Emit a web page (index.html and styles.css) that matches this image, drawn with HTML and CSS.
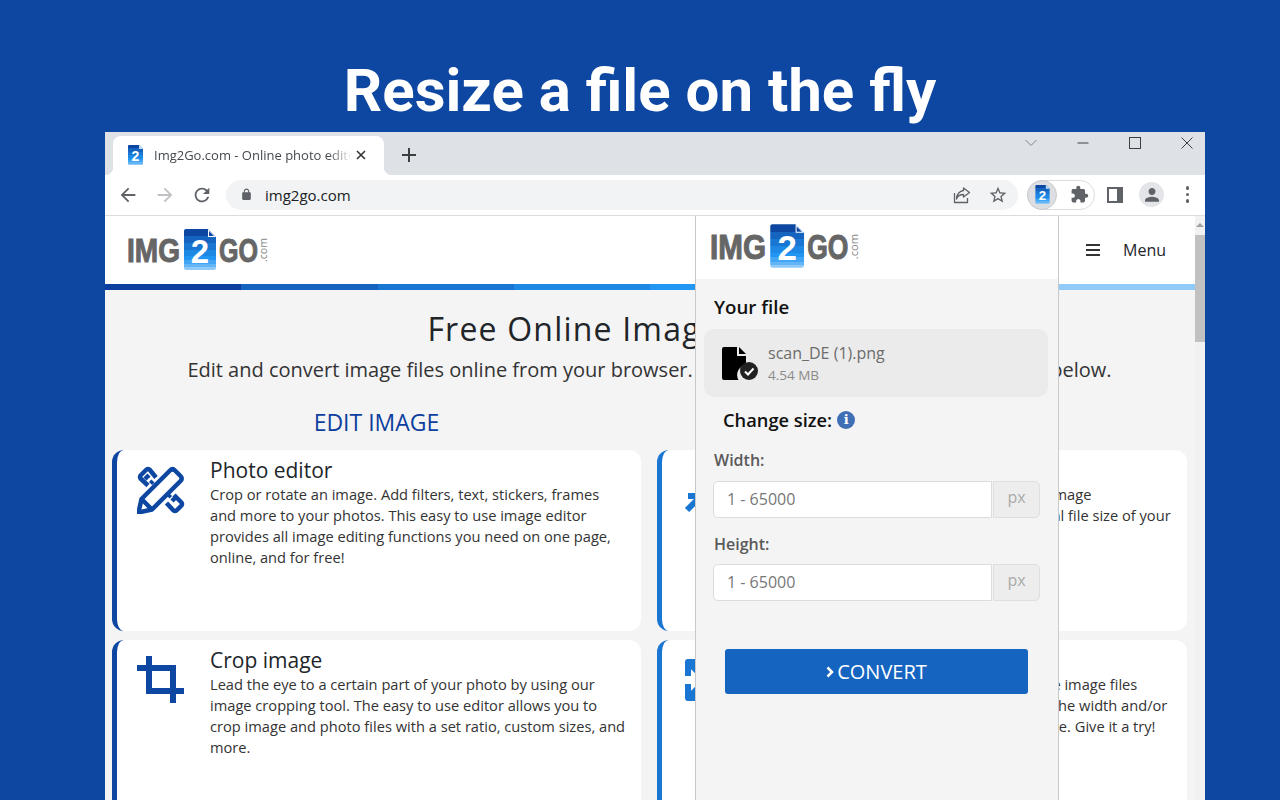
FILE: index.html
```html
<!DOCTYPE html>
<html lang="en">
<head>
<meta charset="utf-8">
<title>Resize a file on the fly</title>
<link rel="stylesheet" href="styles.css">
</head>
<body>
<svg class="defs" width="0" height="0" aria-hidden="true">
  <defs>
    <linearGradient id="fileGrad" x1="0" y1="0" x2="0" y2="1">
      <stop offset="0" stop-color="#0d47a1"/><stop offset=".17" stop-color="#0d47a1"/>
      <stop offset=".17" stop-color="#1565c0"/><stop offset=".34" stop-color="#1565c0"/>
      <stop offset=".34" stop-color="#1976d2"/><stop offset=".5" stop-color="#1976d2"/>
      <stop offset=".5" stop-color="#1e88e5"/><stop offset=".66" stop-color="#1e88e5"/>
      <stop offset=".66" stop-color="#2196f3"/><stop offset=".76" stop-color="#2196f3"/>
      <stop offset=".76" stop-color="#42a5f5"/><stop offset=".86" stop-color="#42a5f5"/>
      <stop offset=".86" stop-color="#64b5f6"/><stop offset=".93" stop-color="#64b5f6"/>
      <stop offset=".93" stop-color="#90caf9"/><stop offset="1" stop-color="#90caf9"/>
    </linearGradient>
    <symbol id="logo" viewBox="0 0 141 41">
      <text class="logo-word" x="0" y="33" textLength="53" lengthAdjust="spacingAndGlyphs">IMG</text>
      <path d="M59 0H81L89 8V39a2 2 0 0 1-2 2H59a2 2 0 0 1-2-2V2a2 2 0 0 1 2-2Z" fill="url(#fileGrad)"/>
      <path d="M81 0V8H89Z" fill="#fff"/><path d="M82 2V7H87Z" fill="#0d47a1"/>
      <text class="logo-two" x="73" y="34" text-anchor="middle">2</text>
      <text class="logo-word" x="92" y="33" textLength="39" lengthAdjust="spacingAndGlyphs">GO</text>
      <text class="logo-com" transform="translate(140 33) rotate(-90)" textLength="24" lengthAdjust="spacingAndGlyphs">.com</text>
    </symbol>
    <symbol id="fav" viewBox="0 0 15 20">
      <path d="M1 0H11L15 4V19a1 1 0 0 1-1 1H1a1 1 0 0 1-1-1V1a1 1 0 0 1 1-1Z" fill="url(#fileGrad)"/>
      <path d="M11 0V4H15Z" fill="#bbdefb"/>
      <text class="fav-two" x="7.5" y="15.5" text-anchor="middle">2</text>
    </symbol>
  </defs>
</svg>

<h1 class="headline">Resize a file on the fly</h1>

<div class="window">
  <div class="titlebar">
    <div class="tab">
      <svg class="favicon"><use href="#fav"/></svg>
      <span class="tab-title">Img2Go.com - Online photo editor</span>
      <svg class="tab-close" viewBox="0 0 10 10"><path d="M1 1L9 9M9 1L1 9"/></svg>
    </div>
    <svg class="new-tab" viewBox="0 0 14 14"><path d="M7 0V14M0 7H14"/></svg>
    <div class="win-controls">
      <svg class="win-icon" viewBox="0 0 12 12"><path d="M0.5 3L6 8.5L11.5 3"/></svg>
      <svg class="win-icon" viewBox="0 0 12 12"><path d="M0.5 6H11.5"/></svg>
      <svg class="win-icon" viewBox="0 0 12 12"><rect x="0.5" y="0.5" width="11" height="11"/></svg>
      <svg class="win-icon" viewBox="0 0 12 12"><path d="M0.5 0.5L11.5 11.5M11.5 0.5L0.5 11.5"/></svg>
    </div>
  </div>

  <div class="toolbar">
    <svg class="tb-icon" viewBox="0 0 24 24"><path d="M20 11H7.83l5.59-5.59L12 4l-8 8 8 8 1.41-1.41L7.83 13H20v-2z"/></svg>
    <svg class="tb-icon tb-disabled" viewBox="0 0 24 24"><path d="M4 11h12.17l-5.59-5.59L12 4l8 8-8 8-1.41-1.41L16.17 13H4v-2z"/></svg>
    <svg class="tb-icon" viewBox="0 0 24 24"><path d="M17.65 6.35C16.2 4.9 14.21 4 12 4c-4.42 0-7.99 3.58-7.99 8s3.57 8 7.99 8c3.73 0 6.84-2.55 7.73-6h-2.08c-.82 2.33-3.04 4-5.65 4-3.31 0-6-2.69-6-6s2.69-6 6-6c1.66 0 3.14.69 4.22 1.78L13 11h7V4l-2.35 2.35z"/></svg>
    <div class="omnibox">
      <svg class="lock" viewBox="0 0 24 24"><path d="M18 8h-1V6c0-2.76-2.24-5-5-5S7 3.24 7 6v2H6c-1.1 0-2 .9-2 2v10c0 1.1.9 2 2 2h12c1.1 0 2-.9 2-2V10c0-1.1-.9-2-2-2zM9 6c0-1.66 1.34-3 3-3s3 1.34 3 3v2H9V6z"/></svg>
      <span class="url">img2go.com</span>
      <svg class="omni-icon share" viewBox="0 0 20 20"><path d="M2.5 8V17.5H15.5V13M11.5 3L17.5 7.5L11.5 12V9.5C8 9.5 5.5 11 4.5 14C4.5 9.5 7.5 6 11.5 5.5Z"/></svg>
      <svg class="omni-icon star" viewBox="0 0 24 24"><path d="M22 9.24l-7.19-.62L12 2 9.19 8.63 2 9.24l5.46 4.73L5.82 21 12 17.27 18.18 21l-1.63-7.03L22 9.24zM12 15.4l-3.76 2.27 1-4.28-3.32-2.88 4.38-.38L12 6.1l1.71 4.04 4.38.38-3.32 2.88 1 4.28L12 15.4z"/></svg>
    </div>
    <div class="ext-pill">
      <span class="ext-active"><svg class="ext-fav"><use href="#fav"/></svg></span>
      <svg class="puzzle" viewBox="0 0 24 24"><path d="M20.5 11H19V7c0-1.1-.9-2-2-2h-4V3.5C13 2.12 11.88 1 10.5 1S8 2.12 8 3.5V5H4c-1.1 0-1.99.9-1.99 2v3.8H3.5c1.49 0 2.7 1.21 2.7 2.7s-1.21 2.7-2.7 2.7H2V20c0 1.1.9 2 2 2h3.8v-1.5c0-1.49 1.21-2.7 2.7-2.7 1.49 0 2.7 1.21 2.7 2.7V22H17c1.1 0 2-.9 2-2v-4h1.5c1.38 0 2.5-1.12 2.5-2.5S21.88 11 20.5 11z"/></svg>
    </div>
    <span class="side-panel"><span class="side-panel-inner"></span></span>
    <span class="avatar"><svg viewBox="0 0 24 24"><path d="M12 12c2.4 0 4.2-1.9 4.2-4.2S14.4 3.6 12 3.6 7.8 5.5 7.8 7.8 9.6 12 12 12zm0 2.2c-2.8 0-8.4 1.4-8.4 4.2V20h16.8v-1.6c0-2.8-5.6-4.2-8.4-4.2z"/></svg></span>
    <span class="dots"><i></i><i></i><i></i></span>
  </div>

  <div class="viewport">
    <div class="page">
      <header class="site-header">
        <svg class="site-logo"><use href="#logo"/></svg>
        <div class="site-menu">
          <span class="burger"><i></i><i></i><i></i></span>
          <span class="menu-label">Menu</span>
        </div>
      </header>
      <div class="stripe"><i class="s1"></i><i class="s2"></i><i class="s3"></i><i class="s4"></i><i class="s5"></i><i class="s6"></i><i class="s7"></i><i class="s8"></i></div>
      <main class="content">
        <h2 class="hero-title">Free Online Image Software</h2>
        <p class="hero-sub">Edit and convert image files online from your browser. Select your desired tools from the list below.</p>
        <div class="columns">
          <h3 class="col-title">EDIT IMAGE</h3>
          <h3 class="col-title">CONVERT IMAGE</h3>
          <article class="card">
            <svg class="card-icon" viewBox="0 0 48 48">
              <path d="M1.5 46.5L4.5 33L33 4.5Q35.5 2 38 4.5L43.5 10Q46 12.5 43.5 15L15 43.5Z"/>
              <path d="M4.5 33L15 43.5"/>
              <path d="M19 11.5L12.5 3.5Q11 2.5 9.5 3.5L3.5 9.5Q2.5 11 3.5 12.5L11 19.5M8 13L12 9M13.5 17.5L16 15M29.5 37L36.5 44.5Q38 45.5 39.5 44.5L44.5 39.5Q45.5 38 44.5 36.5L37 29M35 35L39 31M31 31L33.5 28.5"/>
            </svg>
            <div>
              <h4 class="card-title">Photo editor</h4>
              <p class="card-text">Crop or rotate an image. Add filters, text, stickers, frames and more to your photos. This easy to use image editor provides all image editing functions you need on one page, online, and for free!</p>
            </div>
          </article>
          <article class="card card-alt">
            <svg class="card-icon" viewBox="0 0 48 48">
              <path d="M5 44L20 29M31 18L44 5M31 4V18H45M6 30H20V44"/>
            </svg>
            <div>
              <h4 class="card-title">Compress image</h4>
              <p class="card-text card-fixed">Compress JPG, PNG, and other file types of image<br>online. Reduce the dimensions, and also total file size of your<br>pictures with this tool.</p>
            </div>
          </article>
          <article class="card">
            <svg class="card-icon" viewBox="0 0 48 48">
              <path d="M12 0V35H47M0 12H36V47"/>
            </svg>
            <div>
              <h4 class="card-title">Crop image</h4>
              <p class="card-text">Lead the eye to a certain part of your photo by using our image cropping tool. The easy to use editor allows you to crop image and photo files with a set ratio, custom sizes, and more.</p>
            </div>
          </article>
          <article class="card card-alt">
            <svg class="card-icon" viewBox="0 0 48 48">
              <path d="M6 20V6H20M6 6L20 20M6 28V42H20M6 42L20 28"/>
            </svg>
            <div>
              <h4 class="card-title">Resize image</h4>
              <p class="card-text card-fixed">Use this simple resizer tool to quickly change image files<br>you upload. Simply enter any new value for the width and/or<br>height to get your exact, desired size of image. Give it a try!</p>
            </div>
          </article>
        </div>
      </main>
    </div>
    <div class="scrollbar">
      <span class="scroll-up"></span>
      <span class="scroll-thumb"></span>
    </div>

    <aside class="popup">
      <div class="popup-head"><svg class="popup-logo"><use href="#logo"/></svg></div>
      <div class="popup-body">
        <h5 class="your-file">Your file</h5>
        <div class="file-box">
          <svg class="file-icon" viewBox="0 0 37 33">
            <path d="M2 0H15V9H24V18A10 10 0 0 0 16.5 33H2A2 2 0 0 1 0 31V2A2 2 0 0 1 2 0Z" fill="#000"/>
            <path d="M17 0L24 7H17Z" fill="#000"/>
            <circle cx="27" cy="24" r="9" fill="#222"/>
            <path class="file-check" d="M23 24.5L26 27.5L31.5 21.5"/>
          </svg>
          <div class="file-meta">
            <div class="file-name">scan_DE (1).png</div>
            <div class="file-size">4.54 MB</div>
          </div>
        </div>
        <div class="change-size">
          <span>Change size:</span>
          <span class="info">i</span>
        </div>
        <label class="field-label">Width:</label>
        <div class="field"><span class="field-input">1 - 65000</span><span class="field-unit">px</span></div>
        <label class="field-label field-label-2">Height:</label>
        <div class="field"><span class="field-input">1 - 65000</span><span class="field-unit">px</span></div>
        <button class="convert"><svg viewBox="0 0 8 12"><path d="M1.5 1.5L6 6L1.5 10.5"/></svg>CONVERT</button>
      </div>
    </aside>
  </div>
</div>
</body>
</html>
```

FILE: styles.css
```css
* { box-sizing: border-box; }
html, body { margin: 0; padding: 0; }
body {
  width: 1280px;
  height: 800px;
  overflow: hidden;
  background: #0e47a1;
  display: flex;
  flex-direction: column;
  font-family: "Open Sans", sans-serif;
}
.defs { position: absolute; }
.logo-word { font: 700 33px "Liberation Sans", sans-serif; fill: #666; stroke: #666; stroke-width: 1; }
.logo-two { font: 700 33px "Liberation Sans", sans-serif; fill: #fff; }
.logo-com { font: 400 10px "Open Sans", sans-serif; fill: #888; }
.fav-two { font: 700 14px "Liberation Sans", sans-serif; fill: #fff; }

.headline {
  margin: 0;
  height: 132px;
  padding-top: 55px;
  font: 700 60px/72px Roboto, sans-serif;
  color: #fff;
  text-align: center;
  flex: none;
}

.window {
  width: 1100px;
  margin-left: 105px;
  flex: 1;
  min-height: 0;
  display: flex;
  flex-direction: column;
  background: #fff;
}

/* Title bar */
.titlebar {
  height: 43px;
  flex: none;
  background: #dee1e6;
  display: flex;
  align-items: flex-end;
  padding-left: 8px;
}
.tab {
  width: 271px;
  height: 39px;
  background: #fff;
  border-radius: 8px 8px 0 0;
  display: flex;
  align-items: center;
  padding: 0 0 2px 15px;
  position: relative;
}
.tab::before, .tab::after {
  content: "";
  position: absolute;
  bottom: 0;
  width: 8px;
  height: 8px;
}
.tab::before { left: -8px; background: radial-gradient(circle at 0 0, transparent 8px, #fff 8.5px); }
.tab::after { right: -8px; background: radial-gradient(circle at 100% 0, transparent 8px, #fff 8.5px); }
.favicon { width: 15px; height: 20px; flex: none; }
.tab-title {
  margin-left: 11px;
  width: 198px;
  overflow: hidden;
  white-space: nowrap;
  font: 400 13px "Open Sans", sans-serif;
  color: #45494e;
  -webkit-mask-image: linear-gradient(to right, #000 88%, transparent 100%);
  mask-image: linear-gradient(to right, #000 88%, transparent 100%);
}
.tab-close { width: 10px; height: 10px; margin-left: 4px; flex: none; fill: none; stroke: #333; stroke-width: 1.6; }
.new-tab { width: 14px; height: 14px; margin: 0 0 13px 18px; fill: none; stroke: #3c4043; stroke-width: 2; flex: none; }
.win-controls { margin-left: auto; align-self: flex-start; display: flex; padding: 5px 12px 0 0; gap: 40px; }
.win-icon { width: 12px; height: 12px; fill: none; stroke: #3c4043; stroke-width: 1; }
.win-controls .win-icon:first-child { stroke: #80868b; }

/* Toolbar */
.toolbar {
  height: 41px;
  flex: none;
  display: flex;
  align-items: center;
  padding: 0 0 1px 12px;
  border-bottom: 1px solid #dadce0;
  background: #fff;
}
.tb-icon { width: 22px; height: 22px; fill: #5f6368; flex: none; margin-right: 15px; }
.tb-disabled { fill: #bfc1c4; }
.toolbar .tb-icon:nth-child(3) { margin-right: 14px; }
.omnibox {
  width: 792px;
  height: 30px;
  margin-left: -1px;
  background: #f1f3f4;
  border-radius: 15px;
  display: flex;
  align-items: center;
  padding: 0 10px 0 14px;
  flex: none;
}
.lock { width: 13px; height: 13px; fill: #5f6368; flex: none; }
.url { margin-left: 12px; font: 400 15px "Open Sans", sans-serif; color: #202124; }
.omni-icon { flex: none; }
.share { width: 20px; height: 20px; margin-left: auto; fill: none; stroke: #5f6368; stroke-width: 1.3; stroke-linejoin: round; }
.star { width: 20px; height: 20px; margin-left: 16px; fill: #5f6368; }
.ext-pill {
  width: 68px;
  height: 30px;
  margin-left: 9px;
  border: 1px solid #dadce0;
  border-radius: 15px;
  display: flex;
  align-items: center;
  flex: none;
}
.ext-active {
  width: 30px;
  height: 30px;
  margin-left: -1px;
  border-radius: 50%;
  background: #dcdee1;
  border: 1px solid #c8cacd;
  display: flex;
  align-items: center;
  justify-content: center;
  flex: none;
}
.ext-fav { width: 15px; height: 19px; }
.puzzle { width: 19px; height: 19px; margin-left: 13px; fill: #5f6368; flex: none; }
.side-panel { width: 16px; height: 16px; margin-left: 12px; border: 2.5px solid #5f6368; display: flex; justify-content: flex-end; flex: none; }
.side-panel-inner { width: 4px; background: #5f6368; }
.avatar { width: 25px; height: 25px; margin-left: 16px; border-radius: 50%; background: #e3e5e8; display: flex; align-items: center; justify-content: center; flex: none; }
.avatar svg { width: 20px; height: 20px; fill: #5f6368; }
.dots { margin-left: 22px; display: flex; flex-direction: column; gap: 3px; flex: none; }
.dots i { width: 3.4px; height: 3.4px; border-radius: 50%; background: #5f6368; display: block; }

/* Viewport */
.viewport { flex: 1; min-height: 0; display: flex; position: relative; overflow: hidden; }
.page { width: 1090px; flex: none; background: #f4f4f4; }
.site-header {
  height: 68px;
  background: #fff;
  display: flex;
  align-items: flex-start;
  padding: 13px 29px 0 22px;
}
.site-logo { width: 141px; height: 41px; flex: none; }
.site-menu { margin-left: auto; display: flex; align-items: center; gap: 23px; padding-top: 8px; }
.burger { display: flex; flex-direction: column; gap: 3px; width: 14px; }
.burger i { display: block; height: 2px; background: #333; }
.menu-label { font: 400 16px/26px "Open Sans", sans-serif; color: #212529; }
.stripe { height: 6px; display: flex; }
.stripe i { flex: 1; }
.s1 { background: #0d3f9e; } .s2 { background: #1565c0; } .s3 { background: #1976d2; } .s4 { background: #1e88e5; }
.s5 { background: #2196f3; } .s6 { background: #42a5f5; } .s7 { background: #64b5f6; } .s8 { background: #90caf9; }
.content { padding: 18px 8px 0 7px; text-align: center; }
.hero-title { margin: 0; font: 500 32px/41px "Open Sans", sans-serif; letter-spacing: 1.2px; color: #212529; white-space: nowrap; }
.hero-sub { margin: 7px 0 0; font: 400 20px/27px "Open Sans", sans-serif; color: #333; white-space: nowrap; }
.columns { margin-top: 24px; display: grid; grid-template-columns: 529px 530px; column-gap: 16px; row-gap: 9px; grid-template-rows: 34px; grid-auto-rows: 181px; }
.col-title { margin: 0; font: 500 23px/31px "Open Sans", sans-serif; color: #0d3f9e; }
.card {
  background: #fff;
  border-left: 5px solid #0d47a1;
  border-radius: 12px;
  padding: 8px 14px 0 20px;
  display: flex;
  gap: 25px;
  text-align: left;
  overflow: hidden;
}
.card-alt { border-left-color: #1976d2; }
.card-icon { width: 48px; height: 48px; margin-top: 8px; flex: none; fill: none; stroke: #0d47a1; stroke-width: 4.5; stroke-linejoin: round; }
.card-alt .card-icon { stroke: #1976d2; stroke-width: 6; }
.card:nth-of-type(3) .card-icon { stroke-width: 6; stroke-linejoin: miter; }
.card-title { margin: 0; font: 500 21px/24px "Open Sans", sans-serif; color: #212529; }
.card-text { margin: 2px 0 0; font: 400 14.65px/21px "Open Sans", sans-serif; color: #333; }
.card-fixed { white-space: nowrap; }

/* Scrollbar */
.scrollbar { width: 10px; flex: none; background: #f1f1f1; display: flex; flex-direction: column; align-items: center; }
.scroll-up { margin-top: 7px; border-left: 4px solid transparent; border-right: 4px solid transparent; border-bottom: 4px solid #a3a3a3; }
.scroll-thumb { width: 10px; height: 107px; margin-top: 8px; background: #c1c1c1; }

/* Popup */
.popup {
  position: absolute;
  left: 590px;
  top: -5px;
  width: 364px;
  bottom: 0;
  background: #f4f4f4;
  border: 1px solid #c9c9c9;
  border-bottom: 0;
  display: flex;
  flex-direction: column;
}
.popup-head { height: 67px; background: #fff; padding: 12px 0 0 14px; flex: none; }
.popup-logo { width: 149px; height: 44px; display: block; }
.popup-body { padding: 0 18px 0 8px; display: flex; flex-direction: column; }
.your-file { margin: 15px 0 0 10px; font: 600 18.7px/25px "Open Sans", sans-serif; color: #111; }
.file-box {
  height: 68px;
  margin: 10px -8px 0 0;
  background: #ebebeb;
  border-radius: 10px;
  display: flex;
  align-items: center;
  padding: 0 0 0 18px;
}
.file-icon { width: 37px; height: 33px; flex: none; }
.file-check { fill: none; stroke: #fff; stroke-width: 2; }
.file-meta { margin-left: 9px; margin-top: 1px; }
.file-name { font: 400 16px/22px "Open Sans", sans-serif; color: #6c6c6c; }
.file-size { margin-top: 2px; font: 400 13.5px/19px "Open Sans", sans-serif; color: #8a8a8a; }
.change-size { margin: 11px 0 0 19px; display: flex; align-items: center; gap: 5px; font: 600 18.3px/24px "Open Sans", sans-serif; color: #111; }
.info {
  width: 18px;
  height: 18px;
  border-radius: 50%;
  background: #3f6fb5;
  color: #fff;
  font: 700 13px/18px "DejaVu Serif", serif;
  text-align: center;
}
.field-label { margin: 17px 0 0 10px; font: 600 16px/22px "Open Sans", sans-serif; color: #5a5a5a; }
.field-label-2 { margin: 15px 0 -1px 10px; }
.field { margin: 10px 0 0 9px; display: flex; height: 37px; }
.field-input {
  width: 279px;
  background: #fff;
  border: 1px solid #dcdcdc;
  border-radius: 5px 0 0 5px;
  padding-left: 13px;
  font: 400 16px/35px "Open Sans", sans-serif;
  color: #777;
}
.field-unit {
  width: 47px;
  margin-left: 1px;
  background: #ededed;
  border: 1px solid #dfdfdf;
  border-radius: 0 5px 5px 0;
  text-align: center;
  font: 400 16px/31px "Open Sans", sans-serif;
  color: #aaa;
}
.convert {
  margin: 48px 0 0 21px;
  width: 303px;
  height: 45px;
  flex: none;
  background: #1565c0;
  border: 0;
  border-radius: 3px;
  color: #fff;
  font: 400 20px/45px "Open Sans", sans-serif;
  display: flex;
  align-items: center;
  justify-content: center;
  gap: 3px;
  padding: 0;
}
.convert svg { width: 8px; height: 12px; fill: none; stroke: #fff; stroke-width: 2.5; }
```
